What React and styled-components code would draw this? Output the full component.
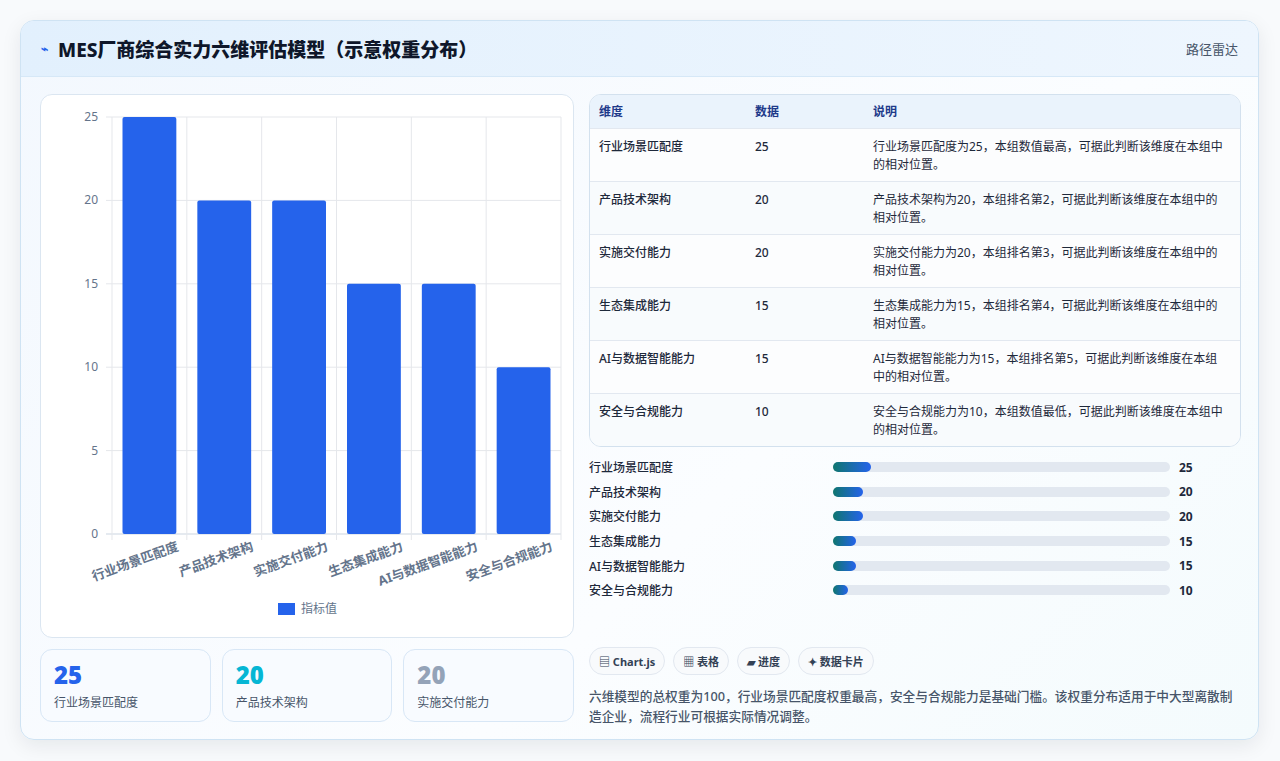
import React from 'react';
import styled, { createGlobalStyle } from 'styled-components';

const Global = createGlobalStyle`
  body { margin: 0; background: #f8fafc; font-family: "Noto Sans", "Noto Sans CJK SC", sans-serif; color: #1e293b; }
`;

const data = [
  { name: '行业场景匹配度', v: 25, note: '行业场景匹配度为25，本组数值最高，可据此判断该维度在本组中的相对位置。' },
  { name: '产品技术架构', v: 20, note: '产品技术架构为20，本组排名第2，可据此判断该维度在本组中的相对位置。' },
  { name: '实施交付能力', v: 20, note: '实施交付能力为20，本组排名第3，可据此判断该维度在本组中的相对位置。' },
  { name: '生态集成能力', v: 15, note: '生态集成能力为15，本组排名第4，可据此判断该维度在本组中的相对位置。' },
  { name: 'AI与数据智能能力', v: 15, note: 'AI与数据智能能力为15，本组排名第5，可据此判断该维度在本组中的相对位置。' },
  { name: '安全与合规能力', v: 10, note: '安全与合规能力为10，本组数值最低，可据此判断该维度在本组中的相对位置。' },
];

const Page = styled.div`
  padding: 20px 21px 21px 20px;
`;
const Card = styled.div`
  height: 720px;
  box-sizing: border-box;
  border: 1px solid #cfe3f3;
  border-radius: 14px;
  background: linear-gradient(135deg, #f3f8fe, #fbfdff 60%, #f4fbfd);
  box-shadow: 0 6px 20px rgba(15, 23, 42, 0.08);
  overflow: hidden;
  display: flex;
  flex-direction: column;
`;
const Header = styled.div`
  height: 56px;
  flex: none;
  box-sizing: border-box;
  border-bottom: 1px solid #d6e8f7;
  background: linear-gradient(90deg, #e2f0fd, #eef6fe);
  display: flex;
  align-items: center;
  justify-content: space-between;
  padding: 0 20px;
`;
const Title = styled.h1`
  margin: 0;
  font-size: 19px;
  font-weight: 800;
  color: #0f172a;
  display: flex;
  align-items: center;
  gap: 10px;
`;
const Bolt = styled.span`
  color: #2563eb;
  font-size: 12px;
`;
const HeaderLink = styled.span`
  font-size: 13px;
  color: #475569;
`;
const Body = styled.div`
  flex: 1;
  display: grid;
  grid-template-columns: 534px 652px;
  gap: 15px;
  padding: 17px 18px 18px 19px;
`;
const Col = styled.div`
  display: flex;
  flex-direction: column;
`;
const ChartPanel = styled.div`
  height: 544px;
  box-sizing: border-box;
  border: 1px solid #dbe6f1;
  border-radius: 12px;
  background: #fff;
`;
const Stats = styled.div`
  margin-top: 11px;
  display: grid;
  grid-template-columns: repeat(3, 1fr);
  gap: 11px;
`;
const Stat = styled.div`
  height: 73px;
  box-sizing: border-box;
  border: 1px solid #d8e7f6;
  border-radius: 12px;
  background: #f8fbff;
  padding: 10px 13px;
`;
const StatNum = styled.div`
  font-size: 24px;
  font-weight: 900;
  color: ${p => p.color};
  line-height: 30px;
`;
const StatLabel = styled.div`
  font-size: 12px;
  color: #475569;
  margin-top: 3px;
`;
const Table = styled.div`
  border: 1px solid #d3e1ee;
  border-radius: 12px;
  overflow: hidden;
  background: #fff;
`;
const Row = styled.div`
  display: grid;
  grid-template-columns: 156px 118px 1fr;
  padding: 0 10px 0 9px;
  font-size: 12px;
  border-top: ${p => (p.head ? 'none' : '1px solid #e2e8f0')};
  background: ${p => (p.head ? '#eaf3fc' : p.alt ? '#f8fbfd' : '#fcfdfe')};
  color: ${p => (p.head ? '#1e3a8a' : '#1e293b')};
  font-weight: ${p => (p.head ? 700 : 400)};
  height: ${p => (p.head ? '33px' : '53px')};
  align-items: ${p => (p.head ? 'center' : 'start')};
  padding-top: ${p => (p.head ? '0' : '9px')};
  box-sizing: border-box;
`;
const Cell = styled.div`
  font-weight: ${p => (p.bold ? 500 : 'inherit')};
  line-height: 18px;
  padding-right: 4px;
`;
const Bars = styled.div`
  margin-top: 11px;
  display: flex;
  flex-direction: column;
  gap: 8.7px;
`;
const BarRow = styled.div`
  display: grid;
  grid-template-columns: 235px 337px 1fr;
  gap: 0 9px;
  align-items: center;
  font-size: 12px;
  font-weight: 500;
  height: 16px;
`;
const Track = styled.div`
  height: 10px;
  border-radius: 5px;
  background: #e2e8f0;
`;
const Fill = styled.div`
  height: 100%;
  border-radius: 5px;
  background: linear-gradient(90deg, #0f766e, #2563eb);
`;
const BarVal = styled.span`
  font-weight: 700;
`;
const Chips = styled.div`
  margin-top: 50px;
  display: flex;
  gap: 8px;
`;
const Chip = styled.span`
  border: 1px solid #e2e8f0;
  border-radius: 14px;
  background: #f8fafc;
  padding: 5px 9px;
  font-size: 11px;
  font-weight: 700;
  color: #334155;
`;
const Summary = styled.p`
  margin: 11px 0 0;
  font-size: 12.7px;
  line-height: 20px;
  color: #475569;
  font-weight: 500;
`;

function Chart() {
  const x0 = 71, x1 = 520, y0 = 22, yb = 439;
  const bw = (x1 - x0) / 6;
  const sy = v => yb - (v / 25) * (yb - y0);
  return (
    <svg width="532" height="542" style={{ display: 'block' }}>
      {[0, 5, 10, 15, 20, 25].map(t => (
        <g key={t}>
          <line x1={x0 - 6} x2={x1} y1={sy(t)} y2={sy(t)} stroke={t === 0 ? '#cbd5e1' : '#e5e7eb'} />
          <text x={x0 - 14} y={sy(t) + 4} textAnchor="end" fontSize="12" fill="#64748b" fontFamily="Noto Sans">{t}</text>
        </g>
      ))}
      {[0, 1, 2, 3, 4, 5, 6].map(i => (
        <line key={i} x1={x0 + i * bw} x2={x0 + i * bw} y1={y0} y2={yb + 6} stroke="#e5e7eb" />
      ))}
      {data.map((d, i) => (
        <g key={d.name}>
          <rect x={x0 + i * bw + 10.5} y={sy(d.v)} width={bw - 21} height={yb - sy(d.v)} rx="2" fill="#2563eb" />
          <text transform={`translate(${x0 + i * bw + bw / 2 + 30},${yb + 16}) rotate(-20)`} textAnchor="end" fontSize="13" fontWeight="700" fill="#64748b" fontFamily="Noto Sans, Noto Sans CJK SC">{d.name}</text>
        </g>
      ))}
      <rect x="237" y="508" width="17" height="12" fill="#2563eb" />
      <text x="260" y="518" fontSize="12" fill="#64748b" fontFamily="Noto Sans CJK SC">指标值</text>
    </svg>
  );
}

export default function App() {
  return (
    <Page>
      <Global />
      <Card>
        <Header>
          <Title><Bolt>⌁</Bolt>MES厂商综合实力六维评估模型（示意权重分布）</Title>
          <HeaderLink>路径雷达</HeaderLink>
        </Header>
        <Body>
          <Col>
            <ChartPanel><Chart /></ChartPanel>
            <Stats>
              <Stat><StatNum color="#2563eb">25</StatNum><StatLabel>行业场景匹配度</StatLabel></Stat>
              <Stat><StatNum color="#06b6d4">20</StatNum><StatLabel>产品技术架构</StatLabel></Stat>
              <Stat><StatNum color="#94a3b8">20</StatNum><StatLabel>实施交付能力</StatLabel></Stat>
            </Stats>
          </Col>
          <Col>
            <Table>
              <Row head><Cell>维度</Cell><Cell>数据</Cell><Cell>说明</Cell></Row>
              {data.map((d, i) => (
                <Row key={d.name} alt={i % 2 === 1}>
                  <Cell bold>{d.name}</Cell><Cell bold>{d.v}</Cell><Cell>{d.note}</Cell>
                </Row>
              ))}
            </Table>
            <Bars>
              {data.map(d => (
                <BarRow key={d.name}>
                  <span>{d.name}</span>
                  <Track><Fill style={{ width: `${d.v * 0.45}%` }} /></Track>
                  <BarVal>{d.v}</BarVal>
                </BarRow>
              ))}
            </Bars>
            <Chips>
              <Chip>▤ Chart.js</Chip><Chip>▦ 表格</Chip><Chip>▰ 进度</Chip><Chip>✦ 数据卡片</Chip>
            </Chips>
            <Summary>六维模型的总权重为100，行业场景匹配度权重最高，安全与合规能力是基础门槛。该权重分布适用于中大型离散制造企业，流程行业可根据实际情况调整。</Summary>
          </Col>
        </Body>
      </Card>
    </Page>
  );
}
